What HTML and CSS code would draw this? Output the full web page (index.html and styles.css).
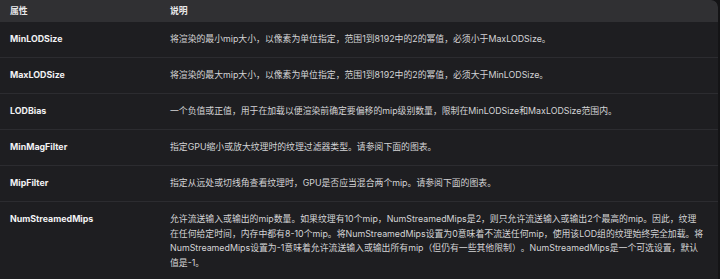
FILE: index.html
```html
<!DOCTYPE html>
<html lang="zh">
<head>
<meta charset="utf-8">
<link rel="stylesheet" href="styles.css">
</head>
<body>
<table class="props">
  <thead>
    <tr><th class="c1">属性</th><th class="c2">说明</th></tr>
  </thead>
  <tbody>
    <tr><td class="name">MinLODSize</td><td class="desc">将渲染的最小mip大小，以像素为单位指定，范围1到8192中的2的幂值，必须小于MaxLODSize。</td></tr>
    <tr><td class="name">MaxLODSize</td><td class="desc">将渲染的最大mip大小，以像素为单位指定，范围1到8192中的2的幂值，必须大于MinLODSize。</td></tr>
    <tr><td class="name">LODBias</td><td class="desc">一个负值或正值，用于在加载以便渲染前确定要偏移的mip级别数量，限制在MinLODSize和MaxLODSize范围内。</td></tr>
    <tr><td class="name">MinMagFilter</td><td class="desc">指定GPU缩小或放大纹理时的纹理过滤器类型。请参阅下面的图表。</td></tr>
    <tr><td class="name">MipFilter</td><td class="desc">指定从远处或切线角查看纹理时，GPU是否应当混合两个mip。请参阅下面的图表。</td></tr>
    <tr><td class="name">NumStreamedMips</td><td class="desc">允许流送输入或输出的mip数量。如果纹理有10个mip，NumStreamedMips是2，则只允许流送输入或输出2个最高的mip。因此，纹理在任何给定时间，内存中都有8-10个mip。将NumStreamedMips设置为0意味着不流送任何mip，使用该LOD组的纹理始终完全加载。将NumStreamedMips设置为-1意味着允许流送输入或输出所有mip（但仍有一些其他限制）。NumStreamedMips是一个可选设置，默认值是-1。</td></tr>
  </tbody>
</table>
</body>
</html>
```

FILE: styles.css
```css
html, body {
  margin: 0;
  padding: 0;
  background: #141416;
}
body {
  font-family: Inter, "Noto Sans CJK SC", sans-serif;
  font-size: 8.85px;
  line-height: 14.4px;
  color: #d6d6d8;
  width: 720px;
  height: 279px;
  overflow: hidden;
  text-spacing-trim: space-all;
}
.props {
  width: 718px;
  border-collapse: separate;
  border-spacing: 0;
  background: #1e1e21;
  border-top-right-radius: 7px;
  overflow: hidden;
}
.props th {
  background: #303033;
  text-align: left;
  font-weight: 700;
  color: #e8e8ea;
  padding: 4px 10px 3.6px;
}
.props th.c2 {
  border-top-right-radius: 7px;
}
.props .c1 {
  width: 140px;
}
.props td {
  padding: 10.3px 14px 10.3px 10px;
  border-bottom: 1px solid #2c2c30;
  vertical-align: top;
}
.props tr:last-child td {
  border-bottom: none;
}
.props td.name {
  font-weight: 700;
  color: #f2f2f4;
}
.props td.desc {
  color: #d4d4d6;
}
```
